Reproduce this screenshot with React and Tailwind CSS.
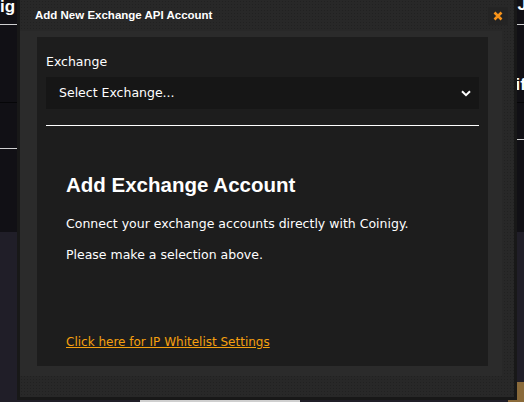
import React from 'react';

const tex = 'bg-[radial-gradient(rgba(0,0,0,0.18)_1px,transparent_1px)] bg-[length:3px_3px]';

function Backdrop() {
  return (
    <div className="absolute inset-0 flex flex-col">
      <div className="h-[232px] bg-[#111015] relative">
        <div className="absolute left-0 top-[-6px] text-[17px] font-bold text-white font-['Liberation_Sans',sans-serif]">ig</div>
        <div className="absolute left-0 top-[24px] w-[17px] h-px bg-white/80" />
        <div className="absolute left-0 top-[102px] w-[17px] h-px bg-black/60" />
        <div className="absolute left-0 top-[148px] w-[17px] h-px bg-white/80" />
        <div className="absolute right-[-3px] top-[-8px] text-[17px] font-bold text-white font-['Liberation_Sans',sans-serif]">J</div>
        <div className="absolute right-0 top-[24px] w-[7px] h-px bg-white/80" />
        <div className="absolute right-[-2px] top-[72px] text-[17px] font-bold text-white font-['Liberation_Sans',sans-serif]">if</div>
        <div className="absolute right-0 top-[102px] w-[7px] h-px bg-black/60" />
        <div className="absolute right-0 top-[139px] w-[7px] h-px bg-white/80" />
      </div>
      <div className="flex-1 bg-[#201e28]" />
      <div className="absolute left-[140px] bottom-0 w-[160px] h-[3px] bg-[#cfcfcf]" />
      <div className="absolute right-0 bottom-0 w-[16px] h-[20px] bg-[#8a6a3a]" />
    </div>
  );
}

export default function App() {
  return (
    <div className="relative w-[524px] h-[402px] overflow-hidden font-['DejaVu_Sans',sans-serif]">
      <Backdrop />
      <div className="absolute left-[17px] top-0 w-[500px] h-[400px] border-[3px] border-t-0 border-[#181818] bg-[#282828] flex flex-col">
        <div className={`absolute inset-0 ${tex}`} />
        <div className="relative flex items-center justify-between h-[31px] pl-[15px] pr-[6px]">
          <h1 className="text-[11.5px] font-bold text-white font-['Liberation_Sans',sans-serif]">Add New Exchange API Account</h1>
          <button className="w-[20px] h-[18px] flex items-center justify-center bg-[#242424]">
            <svg width="10" height="10" viewBox="0 0 10 10">
              <path d="M1.5 1.5L8.5 8.5M8.5 1.5L1.5 8.5" stroke="#f7931a" strokeWidth="2.6" strokeLinecap="butt" />
            </svg>
          </button>
        </div>
        <div className="relative w-[482px] pt-[6px] pl-[17px] pr-[14px] pb-[10px] bg-[#2b2b2b]">
          <div className="h-[329px] bg-[#1d1d1d] px-[9px] pt-[16px] flex flex-col">
            <label className="text-[12.5px] text-white leading-[18px]">Exchange</label>
            <div className="mt-[6px] h-[32px] bg-[#161616] flex items-center justify-between pl-[13px] pr-[8px]">
              <span className="text-[12.5px] text-white">Select Exchange...</span>
              <svg width="10" height="7" viewBox="0 0 10 7">
                <path d="M1 1.2L5 5.2L9 1.2" stroke="white" strokeWidth="2" fill="none" />
              </svg>
            </div>
            <div className="mt-[16px] h-px bg-white" />
            <div className="px-[20px] pt-[48px] flex flex-col flex-1">
              <h2 className="text-[20.5px] font-bold text-white leading-[22px] font-['Liberation_Sans',sans-serif]">Add Exchange Account</h2>
              <p className="mt-[20px] text-[12.5px] text-white leading-[16px]">Connect your exchange accounts directly with Coinigy.</p>
              <p className="mt-[15px] text-[12.5px] text-white leading-[16px]">Please make a selection above.</p>
              <a href="#" className="mt-auto mb-[16px] text-[12px] text-[#f5a00f] underline leading-[16px]">Click here for IP Whitelist Settings</a>
            </div>
          </div>
        </div>
      </div>
    </div>
  );
}
